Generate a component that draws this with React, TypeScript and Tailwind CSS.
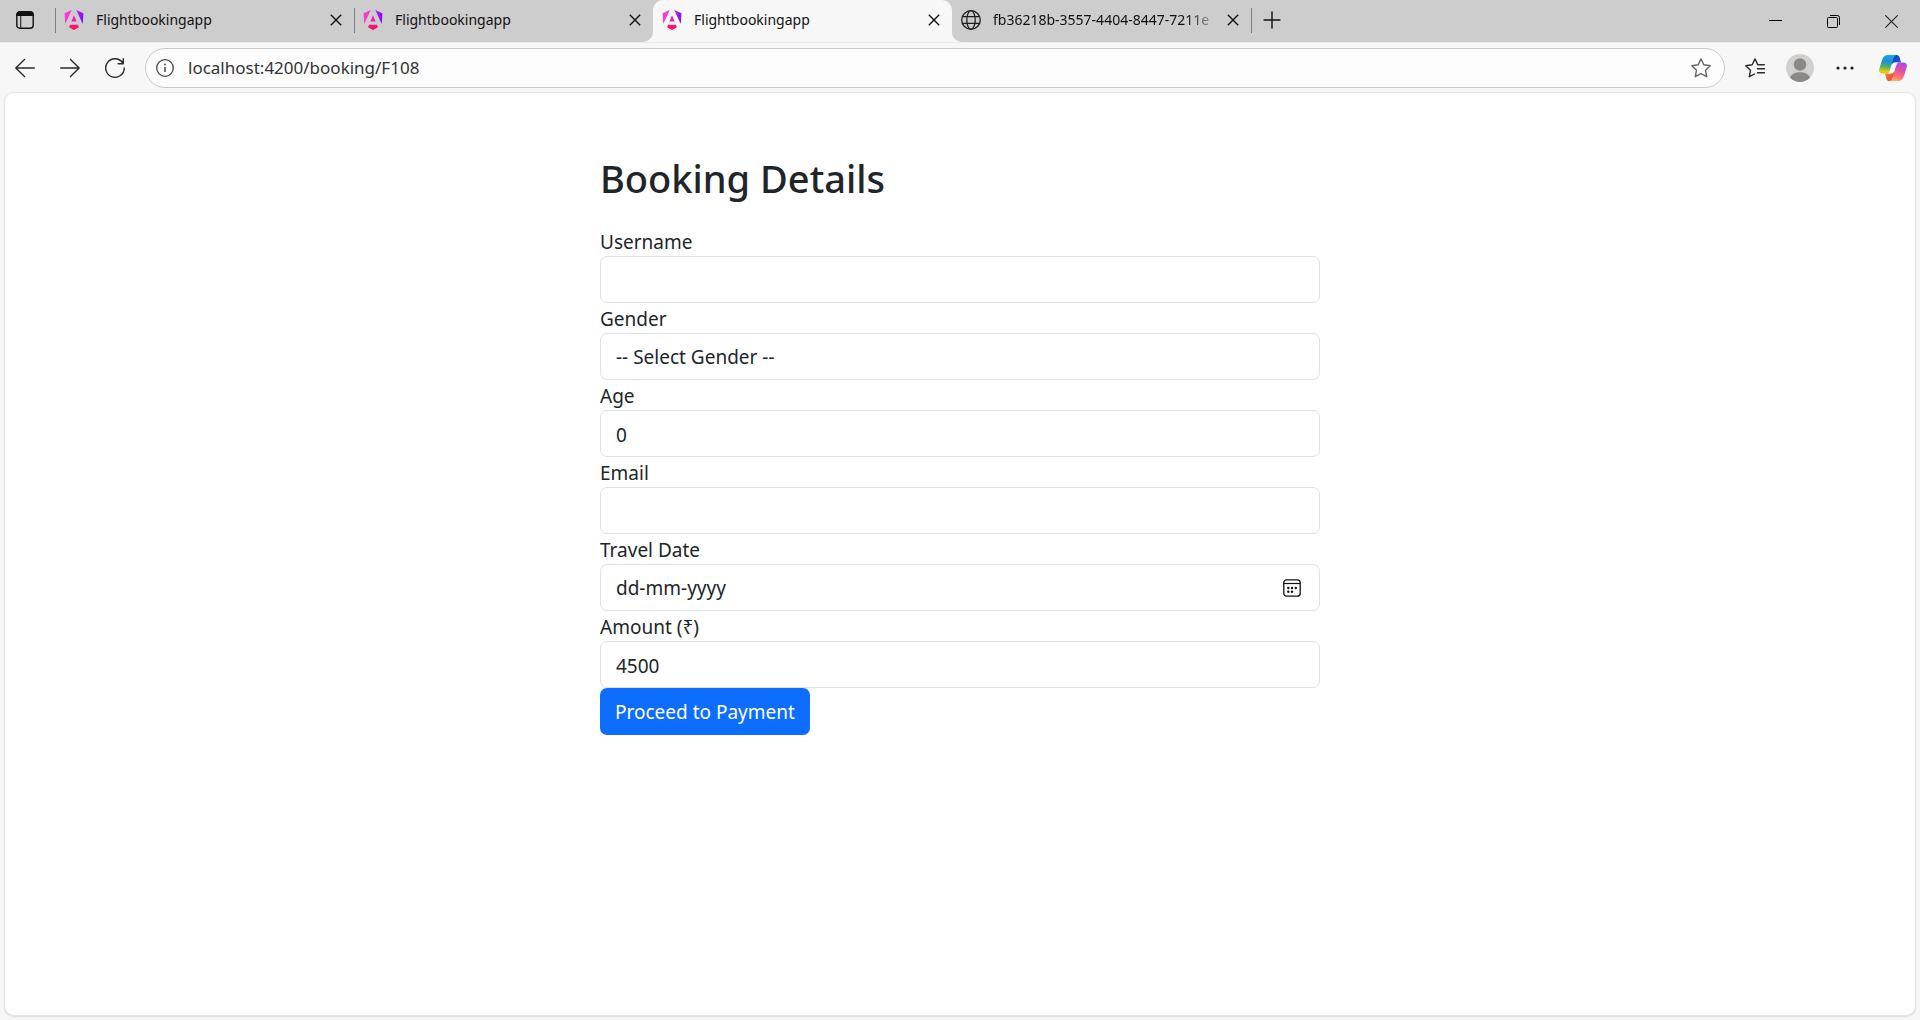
import { useId } from "react";
import type { InputHTMLAttributes, ReactNode } from "react";

function AngularLogo() {
  const id = useId();
  return (
    <svg viewBox="0 0 24 24" className="size-5 shrink-0" aria-hidden="true">
      <defs>
        <linearGradient id={`${id}l`} x1="0" y1="0" x2="1" y2="1">
          <stop offset="0" stopColor="#ff3fd8" />
          <stop offset="1" stopColor="#f52bd0" />
        </linearGradient>
        <linearGradient id={`${id}r`} x1="0" y1="0" x2="1" y2="0.6">
          <stop offset="0" stopColor="#c026f0" />
          <stop offset="1" stopColor="#7a0cff" />
        </linearGradient>
        <linearGradient id={`${id}b`} x1="0" y1="0" x2="0" y2="1">
          <stop offset="0" stopColor="#f6129a" />
          <stop offset="1" stopColor="#ff0f3c" />
        </linearGradient>
      </defs>
      <path fill={`url(#${id}l)`} d="M9.308 0 .662 3.999l.814 12.856L9.308 0Z" />
      <path fill={`url(#${id}r)`} d="m14.692 0 7.832 16.855.814-12.856L14.692 0Z" />
      <path fill="#f01fb4" d="M8.903 13.93h6.198L12 6.396 8.903 13.93Z" />
      <path fill={`url(#${id}b)`} d="M16.712 17.711H7.288l-1.204 2.916L12 24l5.916-3.373-1.204-2.916Z" />
    </svg>
  );
}

function GlobeIcon() {
  return (
    <svg viewBox="0 0 20 20" className="size-5 shrink-0" fill="none" stroke="#1f1f1f" strokeWidth="1.3" aria-hidden="true">
      <circle cx="10" cy="10" r="9.3" />
      <ellipse cx="10" cy="10" rx="4.2" ry="9.3" />
      <path d="M1.5 6.6h17M1.5 13.4h17" />
    </svg>
  );
}

function CloseIcon() {
  return (
    <svg viewBox="0 0 12 12" className="size-3" fill="none" stroke="#111" strokeWidth="1.4" aria-hidden="true">
      <path d="m.8.8 10.4 10.4M11.2.8.8 11.2" />
    </svg>
  );
}

function CopilotIcon() {
  return (
    <svg viewBox="0 0 28 26" className="h-[26px] w-7" aria-hidden="true">
      <defs>
        <linearGradient id="cpLeft" x1="0.4" y1="0" x2="0.3" y2="1">
          <stop offset="0" stopColor="#1da5ea" />
          <stop offset="0.35" stopColor="#1c8fd8" />
          <stop offset="0.65" stopColor="#5bb45c" />
          <stop offset="0.9" stopColor="#f3c80e" />
          <stop offset="1" stopColor="#f9b80b" />
        </linearGradient>
        <linearGradient id="cpRight" x1="0.7" y1="0" x2="0.4" y2="1">
          <stop offset="0" stopColor="#a44cf0" />
          <stop offset="0.45" stopColor="#ec4f9d" />
          <stop offset="0.8" stopColor="#fb7a6e" />
          <stop offset="1" stopColor="#ffad6b" />
        </linearGradient>
        <linearGradient id="cpTop" x1="0" y1="0" x2="1" y2="1">
          <stop offset="0" stopColor="#0b3fb4" />
          <stop offset="1" stopColor="#1e5fe6" />
        </linearGradient>
        <linearGradient id="cpBottom" x1="0" y1="0" x2="1" y2="1">
          <stop offset="0" stopColor="#ff8a2a" />
          <stop offset="1" stopColor="#e8343c" />
        </linearGradient>
      </defs>
      <path fill="url(#cpTop)" d="M13 0h4.5c1.8 0 2.7 1 3.2 2.6L22 7.5h-4.5c-2.500 0-3.500 1.500-4.100 3.300L11 6Z" />
      <path fill="url(#cpBottom)" d="M15 26h-4.500c-1.800 0-2.700-1-3.200-2.600L6 18.500h4.500c2.500 0 3.500-1.500 4.100-3.300L17 20Z" />
      <path fill="url(#cpLeft)" d="M17.500 0H8.200C5.500 0 4 2.200 3 5.200L.5 13c-1.200 3.700.2 5.600 3.300 5.600h3.400c2.100 0 3-1.200 3.600-3.200l3.700-12C15 1.700 16 .2 17.500 0Z" />
      <path fill="url(#cpRight)" d="M10.500 26h9.300c2.700 0 4.200-2.200 5.200-5.200l2.500-7.800c1.200-3.700-.2-5.600-3.300-5.600h-3.400c-2.100 0-3 1.200-3.600 3.200l-3.700 12c-.5 1.700-1.500 3.200-3 3.400Z" />
      <path fill="#f7f7f7" d="M15.500 7.500h3.600c-1 .2-1.600 1-2 2.300l-1.800 5.700c-.6 1.800-1.500 3-3 3H8.900c1-.2 1.600-1 2-2.300l1.800-5.700c.6-1.800 1.300-3 2.800-3Z" />
    </svg>
  );
}

function Tab({ title, icon, active, separator, fade, shape }: { title: string; icon: ReactNode; active?: boolean; separator?: boolean; fade?: boolean; shape?: string }) {
  return (
    <div className={`flex w-[299px] min-w-0 bg-[#cdcdcd] ${shape ?? ""}`}>
      <div className={`flex min-w-0 flex-1 items-center pb-0.5 ${active ? "rounded-t-[10px] bg-[#f7f7f7]" : ""}`}>
        <span className={`h-[25px] w-px shrink-0 ${separator ? "bg-[#7d7d7d]" : ""}`} />
        <button type="button" className="ml-2 flex min-w-0 flex-1 items-center gap-3 text-left text-sm text-[#111]">
          {icon}
          <span className={`flex-1 overflow-hidden whitespace-nowrap ${fade ? "[mask-image:linear-gradient(to_right,#000_85%,transparent)]" : ""}`}>{title}</span>
        </button>
        <button type="button" aria-label={`Close ${title}`} className="mr-1.5 flex h-6 w-6 shrink-0 items-center justify-center">
          <CloseIcon />
        </button>
      </div>
    </div>
  );
}

function ToolButton({ label, children }: { label: string; children: ReactNode }) {
  return (
    <button type="button" aria-label={label} className="flex size-9 shrink-0 items-center justify-center">
      {children}
    </button>
  );
}

const line = { fill: "none", stroke: "#2b2b2b", strokeWidth: 1.4, strokeLinecap: "round", strokeLinejoin: "round" } as const;

const control = "block h-[47px] w-full rounded-[7px] border border-[#dee2e6] bg-white px-[15px] pt-0.5 text-[#212529] placeholder:text-[#212529] outline-none";
const caption = "block h-[30px] leading-8";

function Field({ id, label, ...rest }: { id: string; label: string } & InputHTMLAttributes<HTMLInputElement>) {
  return (
    <div>
      <label htmlFor={id} className={caption}>{label}</label>
      <input id={id} className={control} {...rest} />
    </div>
  );
}

export default function App() {
  return (
    <div className="flex min-h-screen flex-col bg-[#f7f7f7] font-['Noto_Sans','Open_Sans',sans-serif]">
      <header>
        <div className="flex h-[42px] bg-[#f7f7f7]">
          <div className="flex w-[55px] items-center bg-[#cdcdcd] pb-0.5 pl-4">
            <button type="button" aria-label="Tab actions">
              <svg viewBox="0 0 18 18" className="size-[18px]" aria-hidden="true">
                <rect x=".8" y=".8" width="16.4" height="16.4" rx="3" fill="none" stroke="#111" strokeWidth="1.4" />
                <path d="M.5 5V3.5a3 3 0 0 1 3-3h11a3 3 0 0 1 3 3V5Z" fill="#111" />
                <path d="M4.7 5v12" stroke="#333" strokeWidth="1.2" />
              </svg>
            </button>
          </div>
          <Tab title="Flightbookingapp" icon={<AngularLogo />} separator />
          <Tab title="Flightbookingapp" icon={<AngularLogo />} separator shape="rounded-br-[10px]" />
          <Tab title="Flightbookingapp" icon={<AngularLogo />} active />
          <div className="flex min-w-0 flex-1 rounded-bl-[10px] bg-[#cdcdcd]">
            <Tab title="fb36218b-3557-4404-8447-7211e" icon={<GlobeIcon />} fade shape="rounded-bl-[10px]" />
            <div className="flex items-center pb-0.5">
              <span className="h-[25px] w-px bg-[#7d7d7d]" />
              <button type="button" aria-label="New tab" className="ml-0.5 flex h-8 w-9 items-center justify-center">
                <svg viewBox="0 0 18 18" className="size-[18px]" stroke="#111" strokeWidth="1.4" aria-hidden="true">
                  <path d="M9 .5v17M.5 9h17" />
                </svg>
              </button>
            </div>
            <div className="ml-auto flex">
              <button type="button" aria-label="Minimize" className="flex w-[58px] items-center justify-center">
                <svg viewBox="0 0 13 13" className="size-[13px]" stroke="#000" aria-hidden="true"><path d="M0 5.5h13" /></svg>
              </button>
              <button type="button" aria-label="Restore" className="flex w-[58px] items-center justify-center">
                <svg viewBox="0 0 13 13" className="size-[13px]" fill="none" stroke="#000" aria-hidden="true">
                  <rect x=".5" y="2.5" width="10" height="10" rx="1" />
                  <path d="M3 .5h7.500a2 2 0 0 1 2 2V10" />
                </svg>
              </button>
              <button type="button" aria-label="Close window" className="flex w-[58px] items-center justify-center">
                <svg viewBox="0 0 13 13" className="size-[13px]" stroke="#222" strokeWidth="1.1" aria-hidden="true"><path d="m.3.3 12.400 12.400M12.700.3.3 12.700" /></svg>
              </button>
            </div>
          </div>
        </div>

        <div className="flex h-[50px] items-center border-t border-[#ebebeb] pl-[7px] pr-[9px] pt-px">
          <div className="flex gap-[9px]">
            <ToolButton label="Back">
              <svg viewBox="0 0 20 20" className="size-5" {...line}><path d="M19.300 10H.8M9.500 1.500.8 10l8.700 8.500" /></svg>
            </ToolButton>
            <ToolButton label="Forward">
              <svg viewBox="0 0 20 20" className="size-5" {...line}><path d="M.7 10h18.500M10.500 1.500l8.700 8.500-8.700 8.500" /></svg>
            </ToolButton>
            <ToolButton label="Refresh">
              <svg viewBox="0 0 20 20" className="size-5" {...line}><path d="M19.300 10A9.300 9.300 0 1 1 17.500 4.500M18.300.8v5h-5.200" /></svg>
            </ToolButton>
          </div>
          <div className="mx-3 flex h-10 flex-1 items-center rounded-full border border-[#c9c9c9] bg-[#fdfdfd] pl-2.5 pr-[13px]">
            <svg viewBox="0 0 18 18" className="size-[18px]" fill="none" stroke="#444" strokeWidth="1.3" aria-hidden="true">
              <circle cx="9" cy="9" r="8.3" />
              <path d="M9 8v5" strokeWidth="1.5" />
              <circle cx="9" cy="5.5" r=".9" fill="#444" stroke="none" />
            </svg>
            <input aria-label="Address" defaultValue="localhost:4200/booking/F108" className="ml-3.5 min-w-0 flex-1 bg-transparent text-[17px] text-[#333] outline-none" />
            <button type="button" aria-label="Add to favorites">
              <svg viewBox="0 0 20 20" className="size-5" {...line} stroke="#666">
                <path d="m10 .9 2.800 5.900 6.400.9-4.700 4.500 1.200 6.500L10 15.700l-5.700 3 1.200-6.500L.8 7.700l6.400-.9Z" />
              </svg>
            </button>
          </div>
          <div className="flex gap-[9px]">
            <ToolButton label="Favorites">
              <svg viewBox="0 0 20 20" className="size-5" {...line}>
                <path d="M19.300 6.800h-6.500L10 .9 7.200 6.800.8 7.700l4.700 4.500-1.200 6.500 5.200-2.700M12.500 10.800h7M12.500 14.800h7" />
              </svg>
            </ToolButton>
            <ToolButton label="Profile">
              <svg viewBox="0 0 28 28" className="size-7" aria-hidden="true">
                <circle cx="14" cy="14" r="14" fill="#d2d0ce" />
                <circle cx="14" cy="10.500" r="6.200" fill="#8a8886" />
                <path d="M4 23.500C5.500 20 9.500 18.300 14 18.300s8.500 1.700 10 5.200A14 14 0 0 1 14 28a14 14 0 0 1-10-4.500Z" fill="#8a8886" />
              </svg>
            </ToolButton>
            <ToolButton label="Settings and more">
              <svg viewBox="0 0 18 4" className="h-1 w-[18px]" fill="#1f1f1f" aria-hidden="true">
                <circle cx="2" cy="2" r="1.6" /><circle cx="9" cy="2" r="1.6" /><circle cx="16" cy="2" r="1.6" />
              </svg>
            </ToolButton>
          </div>
          <div className="ml-3 flex">
            <ToolButton label="Copilot"><CopilotIcon /></ToolButton>
          </div>
        </div>
      </header>

      <main className="mx-1 mb-1 flex-1 rounded-[10px] border border-[#e6e6e6] bg-white shadow-[0_1px_2px_rgba(0,0,0,0.12)]">
        <form className="mx-auto max-w-[720px] pt-15 text-[19px] text-[#212529]" onSubmit={(e) => e.preventDefault()}>
          <h2 className="mb-[23px] text-[38px] font-medium leading-[50px]">Booking Details</h2>
          <Field id="username" label="Username" type="text" />
          <div>
            <label htmlFor="gender" className={caption}>Gender</label>
            <select id="gender" className={`${control} appearance-none`}>
              <option>-- Select Gender --</option>
              <option>Male</option>
              <option>Female</option>
              <option>Other</option>
            </select>
          </div>
          <Field id="age" label="Age" type="number" defaultValue={0} />
          <Field id="email" label="Email" type="email" />
          <div>
            <label htmlFor="date" className={caption}>Travel Date</label>
            <div className="flex h-[47px] items-center rounded-[7px] border border-[#dee2e6] pl-[15px] pr-[18px]">
              <input id="date" type="text" placeholder="dd-mm-yyyy" className="min-w-0 flex-1 pt-0.5 outline-none placeholder:text-[#212529]" />
              <button type="button" aria-label="Show date picker">
                <svg viewBox="0 0 18 18" className="size-[18px]" aria-hidden="true">
                  <rect x=".8" y=".8" width="16.4" height="16.4" rx="2.8" fill="none" stroke="#111" strokeWidth="1.3" />
                  <path d="M.8 4.500h16.400" stroke="#111" strokeWidth="1.2" />
                  <g fill="#111">
                    <circle cx="5.300" cy="9" r="1.200" /><circle cx="9" cy="9" r="1.200" /><circle cx="12.800" cy="9" r="1.200" />
                    <circle cx="5.300" cy="12.800" r="1.200" /><circle cx="9" cy="12.800" r="1.200" />
                  </g>
                </svg>
              </button>
            </div>
          </div>
          <Field id="amount" label="Amount (₹)" type="number" defaultValue={4500} />
          <button type="submit" className="block h-[47px] rounded-[7px] bg-[#0d6efd] px-[15px] pt-0.5 text-white">Proceed to Payment</button>
        </form>
      </main>
    </div>
  );
}
